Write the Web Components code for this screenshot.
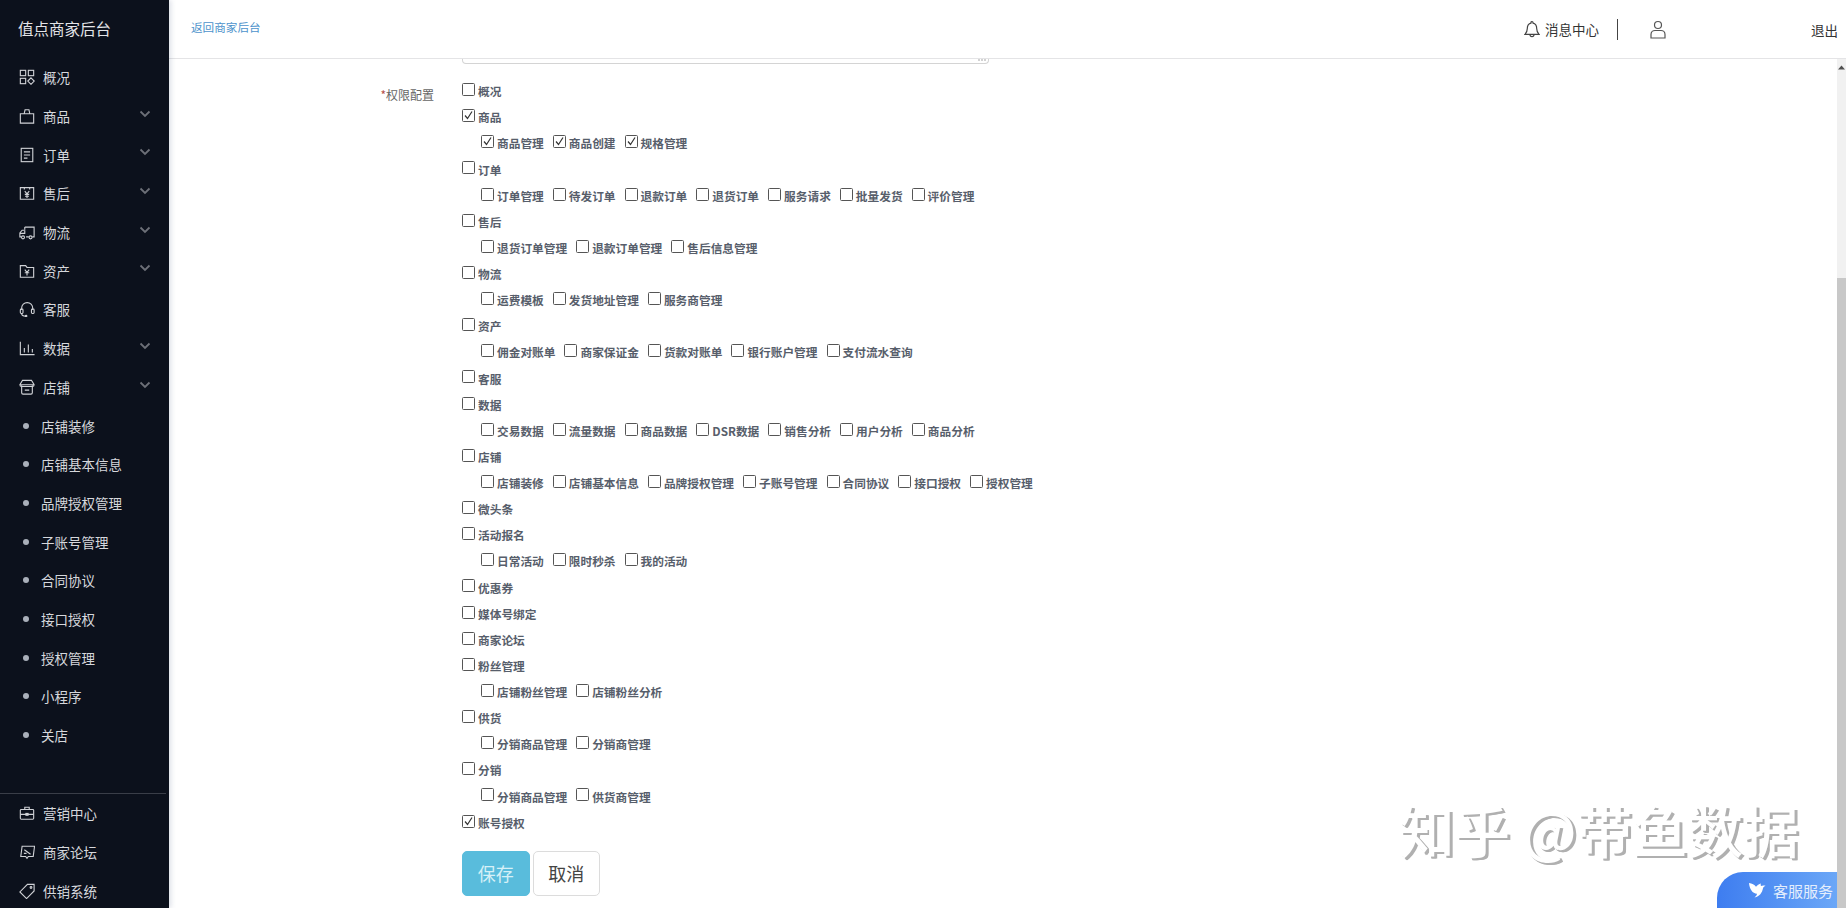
<!DOCTYPE html>
<html lang="zh">
<head>
<meta charset="utf-8">
<title>值点商家后台</title>
<style>
    html, body { margin: 0; height: 100%; overflow: hidden; background: #fff; }
    body { font-family: "Noto Sans CJK SC", "Liberation Sans", sans-serif; }
</style>
</head>
<body>
<admin-app></admin-app>
<script>
const ICONS = {
    overview: '<rect x="1.5" y="1.5" width="6" height="6"/><rect x="10.5" y="1.5" width="6" height="6"/><rect x="1.5" y="10.5" width="6" height="6"/><path d="M13.5 10l3.6 3.6-3.6 3.6-3.6-3.6z"/>',
    goods: '<path d="M1.5 6.5h15v10.5h-15zM5.8 6.5l1-4.5h4.4l1 4.5"/>',
    order: '<rect x="2.5" y="1.5" width="13" height="15"/><path d="M5.5 5.5h7M5.5 9h7M5.5 12.5h4"/>',
    after: '<path d="M1.5 3h15v13h-15zM6 3v2M12 3v2M6.5 7l2.5 3 2.5-3M6.5 10.5h5M6.8 12.7h4.4M9 10v4.5"/>',
    logistics: '<path d="M6.5 3.5h10.5v11h-2M11 14.5H8M6.5 3.5v3M6 7H3.5L1 10v4.5h1.5M1 10.5h5.5V7"/><circle cx="4.5" cy="15" r="1.7"/><circle cx="13" cy="15" r="1.7"/>',
    asset: '<path d="M1.5 3h6L9 5h7.5v11h-15zM6.5 7.5L9 10.5l2.5-3M6.5 11h5M9 10.5V14"/>',
    service: '<path d="M3 10V8a6.2 6.2 0 0 1 12.4 0v2"/><rect x="1.5" y="9" width="3" height="5" rx="1"/><rect x="14" y="9" width="3" height="5" rx="1"/><path d="M3 14c0 2.500 2 3 4.500 3"/><circle cx="8" cy="17" r=".8"/>',
    data: '<path d="M1.5 2v14.500h16M6 9v5M10.500 5v9M15 10v4"/>',
    shop: '<path d="M3 7v8.500A1.500 1.500 0 0 0 4.500 17h9a1.500 1.500 0 0 0 1.500-1.500V7"/><path d="M4 1.500h10l3 5a2 2 0 0 1-2 2H3a2 2 0 0 1-2-2zM1 6.500h16M6.500 12.500h5"/>',
    market: '<rect x="1.5" y="5" width="15" height="11" rx="1"/><path d="M6.500 5V2.500h5V5M1.500 10.500h15"/><rect x="7.8" y="9.500" width="2.4" height="2" fill="currentColor"/>',
    forum: '<path d="M3.500 2.500h14L16 14h-5.500L9 16l-1.500-2H2z"/><path d="M6 6.500l7 5M5.500 10.500h3"/>',
    supply: '<path d="M9.500 1.500H17V9l-8.500 8.500L1 10z"/><circle cx="13.500" cy="5" r="1"/>'
};

// 单个菜单项，一级带图标，二级带圆点
class NavItem extends HTMLElement {
    constructor() {
        super();
        this.shadowDOM = this.attachShadow({mode: "open"});
    }

    connectedCallback() {
        const icon = this.getAttribute("icon");
        const arrow = this.hasAttribute("arrow");
        const lead = icon
            ? `<svg class="icon" viewBox="0 0 18 18" fill="none" stroke="currentColor" stroke-width="1.25">${ICONS[icon]}</svg>`
            : `<span class="dot"></span>`;
        this.shadowDOM.innerHTML = `
            <style>
                :host{
                    display: flex;
                    align-items: center;
                    height: 38.7px;
                    padding-left: ${icon ? "19px" : "23px"};
                    color: #d6d8dc;
                    font-size: 13.5px;
                    position: relative;
                }
                .icon{
                    width: 16px;
                    height: 16px;
                    margin-right: 8px;
                    flex: none;
                    color: #d0d2d6;
                }
                .dot{
                    width: 6px;
                    height: 6px;
                    border-radius: 50%;
                    background: #aab0ba;
                    margin-right: 12px;
                    flex: none;
                }
                .arrow{
                    position: absolute;
                    left: 139px;
                    top: 13px;
                    width: 12px;
                    height: 8px;
                    color: #6d7078;
                }
            </style>
            ${lead}<slot></slot>
            ${arrow ? `<svg class="arrow" viewBox="0 0 12 8" fill="none" stroke="currentColor" stroke-width="1.8"><path d="M1.5 1.5L6 6l4.5-4.5"/></svg>` : ""}
        `;
    }
}
customElements.define("nav-item", NavItem);

class SideBar extends HTMLElement {
    constructor() {
        super();
        this.shadowDOM = this.attachShadow({mode: "open"});
        this.shadowDOM.innerHTML = `
            <style>
                :host{
                    display: flex;
                    flex-direction: column;
                    width: 169px;
                    height: 908px;
                    flex: none;
                    background: #0c111c;
                    box-shadow: 2px 0 5px rgba(60, 80, 120, 0.18);
                    z-index: 3;
                    color: #e4e5e8;
                    overflow: hidden;
                }
                .brand{
                    height: 58px;
                    padding-left: 18px;
                    line-height: 57px;
                    font-size: 15.5px;
                    flex: none;
                }
                nav{
                    flex: 1;
                }
                .bottom{
                    margin: 0 3px -2px 0;
                    border-top: 1px solid #3a3e48;
                }
            </style>
            <div class="brand">值点商家后台</div>
            <nav>
                <nav-item icon="overview">概况</nav-item>
                <nav-item icon="goods" arrow>商品</nav-item>
                <nav-item icon="order" arrow>订单</nav-item>
                <nav-item icon="after" arrow>售后</nav-item>
                <nav-item icon="logistics" arrow>物流</nav-item>
                <nav-item icon="asset" arrow>资产</nav-item>
                <nav-item icon="service">客服</nav-item>
                <nav-item icon="data" arrow>数据</nav-item>
                <nav-item icon="shop" arrow>店铺</nav-item>
                <nav-item>店铺装修</nav-item>
                <nav-item>店铺基本信息</nav-item>
                <nav-item>品牌授权管理</nav-item>
                <nav-item>子账号管理</nav-item>
                <nav-item>合同协议</nav-item>
                <nav-item>接口授权</nav-item>
                <nav-item>授权管理</nav-item>
                <nav-item>小程序</nav-item>
                <nav-item>关店</nav-item>
            </nav>
            <div class="bottom">
                <nav-item icon="market">营销中心</nav-item>
                <nav-item icon="forum">商家论坛</nav-item>
                <nav-item icon="supply">供销系统</nav-item>
            </div>
        `;
    }
}
customElements.define("side-bar", SideBar);

class TopBar extends HTMLElement {
    constructor() {
        super();
        this.shadowDOM = this.attachShadow({mode: "open"});
        this.shadowDOM.innerHTML = `
            <style>
                :host{
                    display: flex;
                    align-items: center;
                    height: 58px;
                    flex: none;
                    background: #fff;
                    border-bottom: 1px solid #e4e4e6;
                    padding-left: 22px;
                    color: #333;
                    font-size: 13.5px;
                    z-index: 2;
                }
                a{
                    color: #4d93cc;
                    font-size: 11.6px;
                    margin-top: -4px;
                    text-decoration: none;
                }
                .msg{
                    margin-left: auto;
                    display: flex;
                    align-items: center;
                    height: 21px;
                }
                .msg svg{
                    width: 16px;
                    height: 19px;
                    margin: 1px 5px 0 0;
                }
                .msg span{
                    margin-top: -1px;
                }
                .sep{
                    width: 1px;
                    height: 21px;
                    background: #444;
                    margin: 0 32px 0 18px;
                }
                .user{
                    width: 16px;
                    height: 19px;
                    margin-top: 1px;
                }
                .out{
                    margin-left: 145px;
                    margin-right: 8px;
                    margin-top: 2px;
                }
            </style>
            <a href="#">返回商家后台</a>
            <div class="msg">
                <svg viewBox="0 0 16 19" fill="none" stroke="#444" stroke-width="1.2"><path d="M8 1.5a1 1 0 0 1 1 1v.6c2.600.5 3.700 2.600 3.700 5.400 0 3 .8 4.300 2.300 5.900H1c1.500-1.600 2.300-2.900 2.300-5.900 0-2.800 1.100-4.900 3.700-5.400v-.6a1 1 0 0 1 1-1zM6 14.500a2 2.200 0 0 0 4 0"/></svg>
                <span>消息中心</span>
            </div>
            <div class="sep"></div>
            <svg class="user" viewBox="0 0 16 19" fill="none" stroke="#555" stroke-width="1.2"><circle cx="8" cy="5" r="3.5"/><path d="M1 18v-3.500C1 12 3 10.500 5 10.500h6c2 0 4 1.500 4 4V18z"/></svg>
            <span class="out">退出</span>
        `;
    }
}
customElements.define("top-bar", TopBar);

// 一个勾选项：方框加文字
class PermCheck extends HTMLElement {
    constructor() {
        super();
        this.shadowDOM = this.attachShadow({mode: "open"});
    }

    connectedCallback() {
        const checked = this.hasAttribute("checked");
        this.shadowDOM.innerHTML = `
            <style>
                :host{
                    display: inline-flex;
                    align-items: center;
                    height: 100%;
                    color: #575e6b;
                    font-size: 11.7px;
                    font-weight: 700;
                    line-height: 1;
                }
                .box{
                    width: 13px;
                    height: 13px;
                    box-sizing: border-box;
                    border: 1px solid #555;
                    border-radius: 1.5px;
                    margin: -3px 3px 0 0;
                    background: #fff;
                    display: block;
                    flex: none;
                }
                svg{
                    display: block;
                    width: 11px;
                    height: 11px;
                }
            </style>
            <span class="box">${checked ? `<svg viewBox="0 0 11 11" fill="none" stroke="#333" stroke-width="1.2"><path d="M2 5.5l2.5 3L9 1.5"/></svg>` : ""}</span>
            <span><slot></slot></span>
        `;
    }
}
customElements.define("perm-check", PermCheck);

// 一组权限，sub 为子行
class PermRow extends HTMLElement {
    constructor() {
        super();
        this.shadowDOM = this.attachShadow({mode: "open"});
    }

    connectedCallback() {
        const sub = this.hasAttribute("sub");
        this.shadowDOM.innerHTML = `
            <style>
                :host{
                    display: flex;
                    gap: 9px;
                    height: 26.13px;
                    padding-left: ${sub ? "19px" : "0"};
                }
            </style>
            <slot></slot>
        `;
    }
}
customElements.define("perm-row", PermRow);

class PermForm extends HTMLElement {
    constructor() {
        super();
        this.shadowDOM = this.attachShadow({mode: "open"});
        this.shadowDOM.innerHTML = `
            <style>
                :host{
                    display: grid;
                    grid-template-columns: 293px 1fr;
                    color: #666;
                    font-size: 12px;
                }
                .clip{
                    grid-column: 2;
                    width: 527px;
                    height: 5px;
                    box-sizing: border-box;
                    border: 1px solid #d4d4d4;
                    border-top: 0;
                    border-radius: 0 0 4px 4px;
                    margin-bottom: 14px;
                    display: flex;
                    justify-content: flex-end;
                    padding-right: 2px;
                }
                .clip svg{
                    width: 8px;
                    height: 2px;
                }
                .label{
                    text-align: right;
                    padding: 8px 28px 0 0;
                }
                .label i{
                    color: #b5504a;
                    font-style: normal;
                }
                .buttons{
                    display: flex;
                    gap: 3px;
                    margin-top: 15px;
                }
            </style>
            <div class="clip"><svg viewBox="0 0 8 2" fill="#999"><circle cx="1" cy="1" r=".8"/><circle cx="4" cy="1" r=".8"/><circle cx="7" cy="1" r=".8"/></svg></div>
            <div class="label"><i>*</i>权限配置</div>
            <div>
                <slot></slot>
                <div class="buttons">
                    <app-button primary>保存</app-button>
                    <app-button>取消</app-button>
                </div>
            </div>
        `;
    }
}
customElements.define("perm-form", PermForm);

class AppButton extends HTMLElement {
    constructor() {
        super();
        this.shadowDOM = this.attachShadow({mode: "open"});
    }

    connectedCallback() {
        const primary = this.hasAttribute("primary");
        this.shadowDOM.innerHTML = `
            <style>
                :host{
                    display: flex;
                    align-items: center;
                    justify-content: center;
                    box-sizing: border-box;
                    width: 67.5px;
                    height: 45px;
                    border-radius: 5px;
                    font-size: 18px;
                    background: ${primary ? "#59bcdc" : "#fff"};
                    color: ${primary ? "#d6f0f7" : "#444"};
                    border: 1px solid ${primary ? "#59bcdc" : "#dcdcdc"};
                }
            </style>
            <slot></slot>
        `;
    }
}
customElements.define("app-button", AppButton);

class ServiceBadge extends HTMLElement {
    constructor() {
        super();
        this.shadowDOM = this.attachShadow({mode: "open"});
        this.shadowDOM.innerHTML = `
            <style>
                :host{
                    position: absolute;
                    right: 9px;
                    bottom: 0;
                    width: 120px;
                    height: 36px;
                    box-sizing: border-box;
                    display: flex;
                    align-items: center;
                    padding-left: 31px;
                    border-radius: 26px 0 0 0;
                    background: linear-gradient(90deg, #3e7df0, #6ba7f7);
                    color: #e4eefc;
                    font-size: 15px;
                }
                svg{
                    width: 18px;
                    height: 16px;
                    margin-right: 7px;
                }
            </style>
            <svg viewBox="0 0 18 16" fill="#fff"><path d="M1 1c3 .3 5.5 1.600 7 3.800C9.200 3 11 1.700 13 1.400c-.5 1.200-.5 2 .2 2.600.9-.6 2.600-.8 4.300-.2-1.300.5-2 1.200-2.500 2.400-.8 4.400-3.500 8.200-8.500 9.300 1.500-1.200 2.300-2.300 2.500-3.700C4.500 11.600 1.500 7 1 1z"/></svg>
            <slot></slot>
        `;
    }
}
customElements.define("service-badge", ServiceBadge);

class AdminApp extends HTMLElement {
    constructor() {
        super();
        this.shadowDOM = this.attachShadow({mode: "open"});
        const rows = [
            ["概况"],
            ["商品!", "商品管理!", "商品创建!", "规格管理!"],
            ["订单", "订单管理", "待发订单", "退款订单", "退货订单", "服务请求", "批量发货", "评价管理"],
            ["售后", "退货订单管理", "退款订单管理", "售后信息管理"],
            ["物流", "运费模板", "发货地址管理", "服务商管理"],
            ["资产", "佣金对账单", "商家保证金", "货款对账单", "银行账户管理", "支付流水查询"],
            ["客服"],
            ["数据", "交易数据", "流量数据", "商品数据", "DSR数据", "销售分析", "用户分析", "商品分析"],
            ["店铺", "店铺装修", "店铺基本信息", "品牌授权管理", "子账号管理", "合同协议", "接口授权", "授权管理"],
            ["微头条"],
            ["活动报名", "日常活动", "限时秒杀", "我的活动"],
            ["优惠券"],
            ["媒体号绑定"],
            ["商家论坛"],
            ["粉丝管理", "店铺粉丝管理", "店铺粉丝分析"],
            ["供货", "分销商品管理", "分销商管理"],
            ["分销", "分销商品管理", "供货商管理"],
            ["账号授权!"]
        ];
        const check = name => {
            const on = name.endsWith("!");
            return `<perm-check ${on ? "checked" : ""}>${on ? name.slice(0, -1) : name}</perm-check>`;
        };
        const html = rows.map(([head, ...subs]) => {
            let out = `<perm-row>${check(head)}</perm-row>`;
            if (subs.length) out += `<perm-row sub>${subs.map(check).join("")}</perm-row>`;
            return out;
        }).join("");
        this.shadowDOM.innerHTML = `
            <style>
                :host{
                    display: flex;
                    width: 1846px;
                    height: 908px;
                    position: relative;
                    overflow: hidden;
                }
                .main{
                    flex: 1;
                    display: flex;
                    flex-direction: column;
                    min-width: 0;
                    position: relative;
                }
                .body{
                    flex: 1;
                    display: flex;
                    overflow: hidden;
                }
                .content{
                    flex: 1;
                }
                .scroll{
                    width: 9px;
                    flex: none;
                    background: #f1f1f1;
                    position: relative;
                }
                .scroll svg{
                    position: absolute;
                    left: 1px;
                    top: 6px;
                    width: 7px;
                    height: 5px;
                }
                .scroll span{
                    position: absolute;
                    left: 0;
                    right: 0;
                    top: 219px;
                    bottom: 0;
                    background: #c8c8c8;
                }
                .mark{
                    position: absolute;
                    left: 1230px;
                    top: 791px;
                    font-size: 55.5px;
                    line-height: 76px;
                    white-space: nowrap;
                    color: #fff;
                    text-shadow: 2px 2px 0 #b0b0b0, 3px 2px 0 #b0b0b0;
                    font-weight: 500;
                }
            </style>
            <side-bar></side-bar>
            <div class="main">
                <top-bar></top-bar>
                <div class="body">
                    <div class="content">
                        <perm-form>${html}</perm-form>
                    </div>
                    <div class="scroll">
                        <svg viewBox="0 0 7 5" fill="#505050"><path d="M3.5 0.5L7 4.500H0z"/></svg>
                        <span></span>
                    </div>
                </div>
                <div class="mark">知乎 @带鱼数据</div>
                <service-badge>客服服务</service-badge>
            </div>
        `;
    }
}
customElements.define("admin-app", AdminApp);
</script>
</body>
</html>
